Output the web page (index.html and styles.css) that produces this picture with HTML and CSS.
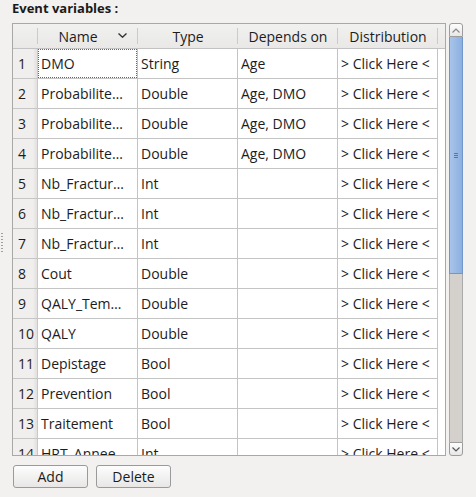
FILE: index.html
```html
<!DOCTYPE html>
<html>
<head>
<meta charset="utf-8">
<link rel="stylesheet" href="styles.css">
</head>
<body>
<div class="title">Event variables :</div>
<div class="main">
  <div class="grip"></div>
  <div class="view">
    <div class="row hdr">
      <div class="hcell corner"></div>
      <div class="hcell sort"><span>Name</span><svg class="chev" width="9" height="5" viewBox="0 0 9 5"><path d="M0.5 0.5 L4.5 4.2 L8.5 0.5" fill="none" stroke="#333" stroke-width="1.4"/></svg></div>
      <div class="hcell">Type</div>
      <div class="hcell">Depends on</div>
      <div class="hcell">Distribution</div>
      <div class="hfill"></div>
    </div>
    <div class="row"><div class="num">1</div><div class="cell focuscell"><span class="focus">DMO</span></div><div class="cell">String</div><div class="cell">Age</div><div class="cell">&gt; Click Here &lt;</div><div class="fill"></div></div>
    <div class="row"><div class="num">2</div><div class="cell">Probabilite…</div><div class="cell">Double</div><div class="cell">Age, DMO</div><div class="cell">&gt; Click Here &lt;</div><div class="fill"></div></div>
    <div class="row"><div class="num">3</div><div class="cell">Probabilite…</div><div class="cell">Double</div><div class="cell">Age, DMO</div><div class="cell">&gt; Click Here &lt;</div><div class="fill"></div></div>
    <div class="row"><div class="num">4</div><div class="cell">Probabilite…</div><div class="cell">Double</div><div class="cell">Age, DMO</div><div class="cell">&gt; Click Here &lt;</div><div class="fill"></div></div>
    <div class="row"><div class="num">5</div><div class="cell">Nb_Fractur…</div><div class="cell">Int</div><div class="cell"></div><div class="cell">&gt; Click Here &lt;</div><div class="fill"></div></div>
    <div class="row"><div class="num">6</div><div class="cell">Nb_Fractur…</div><div class="cell">Int</div><div class="cell"></div><div class="cell">&gt; Click Here &lt;</div><div class="fill"></div></div>
    <div class="row"><div class="num">7</div><div class="cell">Nb_Fractur…</div><div class="cell">Int</div><div class="cell"></div><div class="cell">&gt; Click Here &lt;</div><div class="fill"></div></div>
    <div class="row"><div class="num">8</div><div class="cell">Cout</div><div class="cell">Double</div><div class="cell"></div><div class="cell">&gt; Click Here &lt;</div><div class="fill"></div></div>
    <div class="row"><div class="num">9</div><div class="cell">QALY_Tem…</div><div class="cell">Double</div><div class="cell"></div><div class="cell">&gt; Click Here &lt;</div><div class="fill"></div></div>
    <div class="row"><div class="num">10</div><div class="cell">QALY</div><div class="cell">Double</div><div class="cell"></div><div class="cell">&gt; Click Here &lt;</div><div class="fill"></div></div>
    <div class="row"><div class="num">11</div><div class="cell">Depistage</div><div class="cell">Bool</div><div class="cell"></div><div class="cell">&gt; Click Here &lt;</div><div class="fill"></div></div>
    <div class="row"><div class="num">12</div><div class="cell">Prevention</div><div class="cell">Bool</div><div class="cell"></div><div class="cell">&gt; Click Here &lt;</div><div class="fill"></div></div>
    <div class="row"><div class="num">13</div><div class="cell">Traitement</div><div class="cell">Bool</div><div class="cell"></div><div class="cell">&gt; Click Here &lt;</div><div class="fill"></div></div>
    <div class="row"><div class="num">14</div><div class="cell">HRT_Annee</div><div class="cell">Int</div><div class="cell"></div><div class="cell">&gt; Click Here &lt;</div><div class="fill"></div></div>
  </div>
  <div class="vscroll">
    <div class="sbtn up"><svg width="8" height="5" viewBox="0 0 8 5"><path d="M0.5 4.5 L4 1 L7.5 4.5" fill="none" stroke="#888" stroke-width="1.2"/></svg></div>
    <div class="thumb"><div class="gripl"></div><div class="gripl"></div><div class="gripl"></div></div>
    <div class="track"></div>
    <div class="sbtn down"><svg width="8" height="5" viewBox="0 0 8 5"><path d="M0.5 0.5 L4 4 L7.5 0.5" fill="none" stroke="#555" stroke-width="1.2"/></svg></div>
  </div>
</div>
<div class="actions">
  <button class="btn">Add</button>
  <button class="btn">Delete</button>
</div>
</body>
</html>
```
FILE: styles.css
```css
html, body {
  margin: 0;
  padding: 0;
  background: #f2f1f0;
  font-family: "Open Sans", "DejaVu Sans", sans-serif;
  color: #1c1c1c;
}
body {
  width: 476px;
  height: 497px;
  overflow: hidden;
}
.title {
  height: 23px;
  box-sizing: border-box;
  padding: 0 0 0 12px;
  font-size: 13px;
  line-height: 17px;
  font-weight: bold;
  color: #1a1a1a;
}
.main {
  display: flex;
  align-items: flex-start;
  height: 433px;
}
.grip {
  width: 2px;
  height: 20px;
  margin: 210px 9px 0 1px;
  background: repeating-linear-gradient(#a0a0a0 0 1px, transparent 1px 3px);
}
.view {
  width: 434px;
  height: 433px;
  box-sizing: border-box;
  border: 1px solid #a8a8a8;
  background: #fff;
  overflow: hidden;
}
.row {
  display: grid;
  grid-template-columns: 25px 100px 100px 100px 100px 1fr;
  height: 30px;
}
.hdr {
  height: 25px;
  background: linear-gradient(#f1f1f0, #e9e8e7);
  border-bottom: 1px solid #c2c2c2;
  box-sizing: border-box;
}
.hcell {
  display: flex;
  align-items: center;
  justify-content: center;
  font-size: 14px;
  white-space: nowrap;
  background: linear-gradient(#cbcbca, #cbcbca) right center / 1px 16px no-repeat;
}
.sort {
  position: relative;
  padding-right: 20px;
}
.sort .chev {
  position: absolute;
  right: 11px;
  top: 9px;
}
.num {
  box-sizing: border-box;
  border-right: 1px solid #c8c8c8;
  border-bottom: 1px solid #c6c6c6;
  background: linear-gradient(90deg, #f0efee 0, #f0efee 20px, #e4e3e2 23px);
  font-size: 14px;
  padding-left: 5px;
  display: flex;
  align-items: center;
}
.cell {
  box-sizing: border-box;
  border-right: 1px solid #c4c4c4;
  border-bottom: 1px solid #c4c4c4;
  font-size: 14px;
  padding-left: 3px;
  display: flex;
  align-items: center;
  white-space: nowrap;
  overflow: hidden;
}
.focuscell {
  padding: 0;
  align-items: stretch;
}
.focus {
  flex: 1;
  border: 1px dotted #666;
  padding-left: 2px;
  display: flex;
  align-items: center;
}
.fill {
  background: #fff;
}
.vscroll {
  width: 14px;
  height: 433px;
  margin-left: 3px;
  display: flex;
  flex-direction: column;
}
.sbtn {
  height: 14px;
  box-sizing: border-box;
  border: 1px solid #9c9c9c;
  background: linear-gradient(#fdfdfd, #e8e7e6);
  display: flex;
  align-items: center;
  justify-content: center;
}
.up {
  border-radius: 3px 3px 0 0;
}
.down {
  border-radius: 0 0 3px 3px;
}
.thumb {
  height: 237px;
  box-sizing: border-box;
  border: 1px solid #7196cc;
  border-top: none;
  background: linear-gradient(90deg, #a8c4ea, #8cb0e0);
  display: flex;
  flex-direction: column;
  align-items: center;
  justify-content: center;
  gap: 1px;
}
.gripl {
  width: 4px;
  height: 1px;
  background: #5677aa;
}
.track {
  flex: 1;
  box-sizing: border-box;
  border-left: 1px solid #a9a9a9;
  border-right: 1px solid #a9a9a9;
  background: #d4d1cc;
}
.actions {
  display: flex;
  gap: 8px;
  padding: 9px 0 0 13px;
}
.btn {
  width: 75px;
  height: 23px;
  box-sizing: border-box;
  border: 1px solid #9a9a9a;
  border-radius: 3px;
  background: linear-gradient(#fdfdfd, #e8e7e6);
  font-family: "Open Sans", "DejaVu Sans", sans-serif;
  font-size: 14px;
  color: #1c1c1c;
  padding: 0;
}
```
